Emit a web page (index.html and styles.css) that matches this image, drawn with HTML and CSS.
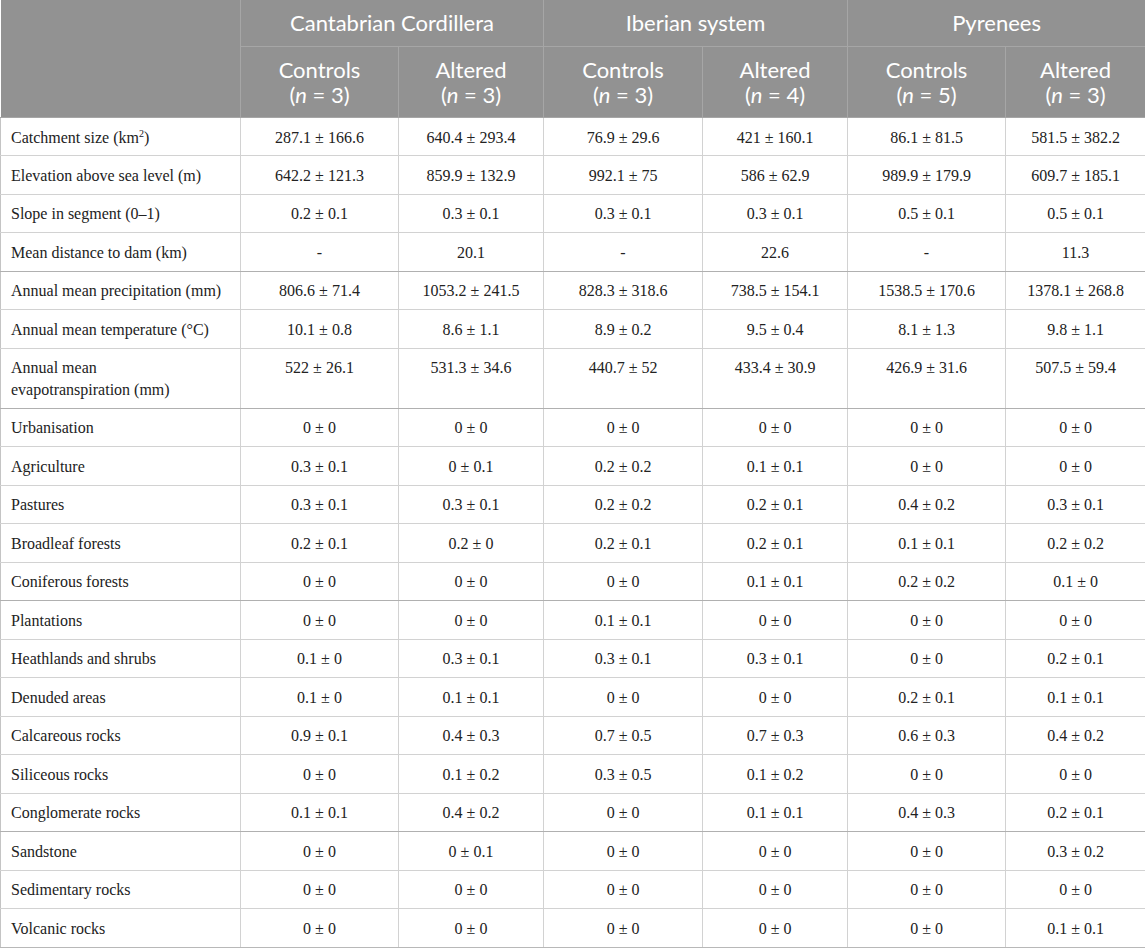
FILE: index.html
```html
<!DOCTYPE html>
<html>
<head>
  <title>Catchment characteristics</title>
  <link rel="stylesheet" href="styles.css">
</head>
<body>
  <table class="data-table">
    <colgroup>
      <col class="c-label">
      <col class="c1"><col class="c2"><col class="c3"><col class="c4"><col class="c5"><col class="c6">
    </colgroup>
    <thead>
      <tr class="head-top">
        <th rowspan="2" class="corner"></th>
        <th colspan="2">Cantabrian Cordillera</th>
        <th colspan="2">Iberian system</th>
        <th colspan="2">Pyrenees</th>
      </tr>
      <tr class="head-sub">
        <th>Controls<br>(<i>n</i> = 3)</th>
        <th>Altered<br>(<i>n</i> = 3)</th>
        <th>Controls<br>(<i>n</i> = 3)</th>
        <th>Altered<br>(<i>n</i> = 4)</th>
        <th>Controls<br>(<i>n</i> = 5)</th>
        <th>Altered<br>(<i>n</i> = 3)</th>
      </tr>
    </thead>
    <tbody>
      <tr><td>Catchment size (km<sup>2</sup>)</td><td>287.1 ± 166.6</td><td>640.4 ± 293.4</td><td>76.9 ± 29.6</td><td>421 ± 160.1</td><td>86.1 ± 81.5</td><td>581.5 ± 382.2</td></tr>
      <tr><td>Elevation above sea level (m)</td><td>642.2 ± 121.3</td><td>859.9 ± 132.9</td><td>992.1 ± 75</td><td>586 ± 62.9</td><td>989.9 ± 179.9</td><td>609.7 ± 185.1</td></tr>
      <tr><td>Slope in segment (0–1)</td><td>0.2 ± 0.1</td><td>0.3 ± 0.1</td><td>0.3 ± 0.1</td><td>0.3 ± 0.1</td><td>0.5 ± 0.1</td><td>0.5 ± 0.1</td></tr>
      <tr class="group-end"><td>Mean distance to dam (km)</td><td>-</td><td>20.1</td><td>-</td><td>22.6</td><td>-</td><td>11.3</td></tr>
      <tr><td>Annual mean precipitation (mm)</td><td>806.6 ± 71.4</td><td>1053.2 ± 241.5</td><td>828.3 ± 318.6</td><td>738.5 ± 154.1</td><td>1538.5 ± 170.6</td><td>1378.1 ± 268.8</td></tr>
      <tr><td>Annual mean temperature (°C)</td><td>10.1 ± 0.8</td><td>8.6 ± 1.1</td><td>8.9 ± 0.2</td><td>9.5 ± 0.4</td><td>8.1 ± 1.3</td><td>9.8 ± 1.1</td></tr>
      <tr class="group-end"><td>Annual mean<br>evapotranspiration (mm)</td><td>522 ± 26.1</td><td>531.3 ± 34.6</td><td>440.7 ± 52</td><td>433.4 ± 30.9</td><td>426.9 ± 31.6</td><td>507.5 ± 59.4</td></tr>
      <tr><td>Urbanisation</td><td>0 ± 0</td><td>0 ± 0</td><td>0 ± 0</td><td>0 ± 0</td><td>0 ± 0</td><td>0 ± 0</td></tr>
      <tr><td>Agriculture</td><td>0.3 ± 0.1</td><td>0 ± 0.1</td><td>0.2 ± 0.2</td><td>0.1 ± 0.1</td><td>0 ± 0</td><td>0 ± 0</td></tr>
      <tr><td>Pastures</td><td>0.3 ± 0.1</td><td>0.3 ± 0.1</td><td>0.2 ± 0.2</td><td>0.2 ± 0.1</td><td>0.4 ± 0.2</td><td>0.3 ± 0.1</td></tr>
      <tr><td>Broadleaf forests</td><td>0.2 ± 0.1</td><td>0.2 ± 0</td><td>0.2 ± 0.1</td><td>0.2 ± 0.1</td><td>0.1 ± 0.1</td><td>0.2 ± 0.2</td></tr>
      <tr class="group-end"><td>Coniferous forests</td><td>0 ± 0</td><td>0 ± 0</td><td>0 ± 0</td><td>0.1 ± 0.1</td><td>0.2 ± 0.2</td><td>0.1 ± 0</td></tr>
      <tr><td>Plantations</td><td>0 ± 0</td><td>0 ± 0</td><td>0.1 ± 0.1</td><td>0 ± 0</td><td>0 ± 0</td><td>0 ± 0</td></tr>
      <tr><td>Heathlands and shrubs</td><td>0.1 ± 0</td><td>0.3 ± 0.1</td><td>0.3 ± 0.1</td><td>0.3 ± 0.1</td><td>0 ± 0</td><td>0.2 ± 0.1</td></tr>
      <tr><td>Denuded areas</td><td>0.1 ± 0</td><td>0.1 ± 0.1</td><td>0 ± 0</td><td>0 ± 0</td><td>0.2 ± 0.1</td><td>0.1 ± 0.1</td></tr>
      <tr><td>Calcareous rocks</td><td>0.9 ± 0.1</td><td>0.4 ± 0.3</td><td>0.7 ± 0.5</td><td>0.7 ± 0.3</td><td>0.6 ± 0.3</td><td>0.4 ± 0.2</td></tr>
      <tr><td>Siliceous rocks</td><td>0 ± 0</td><td>0.1 ± 0.2</td><td>0.3 ± 0.5</td><td>0.1 ± 0.2</td><td>0 ± 0</td><td>0 ± 0</td></tr>
      <tr class="group-end"><td>Conglomerate rocks</td><td>0.1 ± 0.1</td><td>0.4 ± 0.2</td><td>0 ± 0</td><td>0.1 ± 0.1</td><td>0.4 ± 0.3</td><td>0.2 ± 0.1</td></tr>
      <tr><td>Sandstone</td><td>0 ± 0</td><td>0 ± 0.1</td><td>0 ± 0</td><td>0 ± 0</td><td>0 ± 0</td><td>0.3 ± 0.2</td></tr>
      <tr><td>Sedimentary rocks</td><td>0 ± 0</td><td>0 ± 0</td><td>0 ± 0</td><td>0 ± 0</td><td>0 ± 0</td><td>0 ± 0</td></tr>
      <tr><td>Volcanic rocks</td><td>0 ± 0</td><td>0 ± 0</td><td>0 ± 0</td><td>0 ± 0</td><td>0 ± 0</td><td>0.1 ± 0.1</td></tr>
    </tbody>
  </table>
</body>
</html>
```

FILE: styles.css
```css
body {
	margin: 0;
	background: #ffffff;
}

.data-table {
	width: 1145px;
	border-collapse: collapse;
	table-layout: fixed;
	color: #222222;
}

.c-label { width: 240px; }
.c1 { width: 158px; }
.c2 { width: 145px; }
.c3 { width: 159px; }
.c4 { width: 145px; }
.c5 { width: 158px; }
.c6 { width: 140px; }

/* header */
thead th {
	background-color: #929292;
	color: #ffffff;
	font-family: Lato, 'Open Sans', sans-serif;
	font-weight: 400;
	font-size: 22px;
	line-height: 25px;
	text-align: center;
	border: 1px solid #a6a6a6;
	border-top: 0;
}

thead th i {
	font-style: italic;
}

.head-top th {
	padding: 10px 6px 11px;
}

.head-sub th {
	padding: 10px 6px 10px;
}

thead th.corner {
	border-left: 0;
}

/* body */
tbody td {
	font-family: 'Liberation Serif', 'Times New Roman', serif;
	font-size: 16px;
	border: 1px solid #d2d2d2;
	padding: 8.5px 10px 7.4px;
	line-height: 21.6px;
	text-align: center;
	vertical-align: top;
}

tbody td:first-child {
	text-align: left;
	border-left-color: #c4c4c4;
}

tbody tr.group-end td {
	border-bottom-color: #b0b0b0;
}

tbody tr:last-child td {
	border-bottom-color: #b8b8b8;
}

sup {
	font-size: 10px;
	line-height: 0;
	vertical-align: 6px;
}
```
